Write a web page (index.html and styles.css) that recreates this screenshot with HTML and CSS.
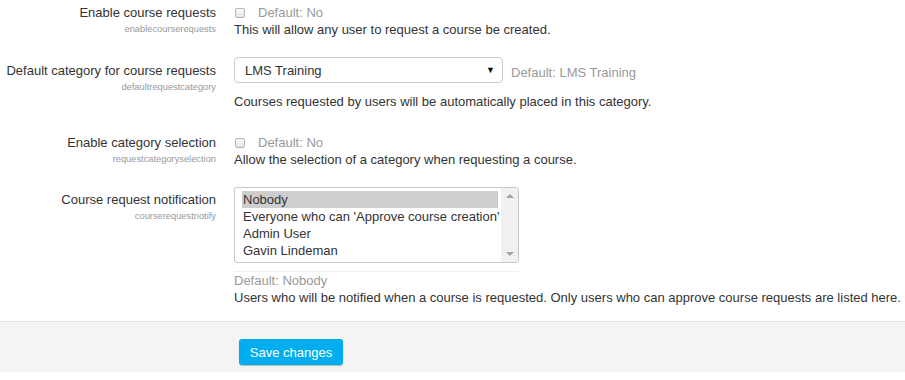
FILE: index.html
```html
<!DOCTYPE html>
<html>

<head>
    <title>Course requests</title>
    <link rel="stylesheet" href="styles.css">
</head>

<body>
    <form class="settings">
        <div class="setting row-first">
            <div class="label-col">
                <div class="label">Enable course requests</div>
                <div class="sublabel">enablecourserequests</div>
            </div>
            <div class="control-col">
                <div class="inline">
                    <span class="checkbox"></span>
                    <span class="default">Default: No</span>
                </div>
                <div class="desc">This will allow any user to request a course be created.</div>
            </div>
        </div>

        <div class="setting row-select">
            <div class="label-col label-select">
                <div class="label">Default category for course requests</div>
                <div class="sublabel">defaultrequestcategory</div>
            </div>
            <div class="control-col">
                <div class="inline">
                    <div class="select">
                        <span>LMS Training</span>
                        <span class="arrow">&#9660;</span>
                    </div>
                    <span class="default default-select">Default: LMS Training</span>
                </div>
                <div class="desc desc-select">Courses requested by users will be automatically placed in this category.</div>
            </div>
        </div>

        <div class="setting row-third">
            <div class="label-col">
                <div class="label">Enable category selection</div>
                <div class="sublabel">requestcategoryselection</div>
            </div>
            <div class="control-col">
                <div class="inline">
                    <span class="checkbox"></span>
                    <span class="default">Default: No</span>
                </div>
                <div class="desc">Allow the selection of a category when requesting a course.</div>
            </div>
        </div>

        <div class="setting row-list">
            <div class="label-col label-list">
                <div class="label">Course request notification</div>
                <div class="sublabel">courserequestnotify</div>
            </div>
            <div class="control-col">
                <div class="listbox">
                    <div class="options">
                        <div class="option selected">Nobody</div>
                        <div class="option">Everyone who can 'Approve course creation'</div>
                        <div class="option">Admin User</div>
                        <div class="option">Gavin Lindeman</div>
                    </div>
                    <div class="scrollbar">
                        <span class="up"></span>
                        <span class="down"></span>
                    </div>
                </div>
                <div class="list-rule"></div>
                <div class="default">Default: Nobody</div>
                <div class="desc">Users who will be notified when a course is requested. Only users who can approve course requests are listed here.</div>
            </div>
        </div>

        <div class="buttons">
            <button type="button" class="btn-save">Save changes</button>
        </div>
    </form>
</body>

</html>
```

FILE: styles.css
```css
* {
    padding: 0;
    margin: 0;
    box-sizing: border-box;
}

body {
    background-color: #fff;
    font-family: "Liberation Sans", Arial, sans-serif;
    font-size: 13px;
    line-height: 17px;
    color: #333;
}

.settings {
    padding-top: 4px;
}

.setting {
    display: grid;
    grid-template-columns: 216px 1fr;
    column-gap: 18px;
}

.row-select {
    margin-top: 19px;
}

.row-third {
    margin-top: 24px;
}

.row-list {
    margin-top: 19px;
}

.label-col {
    text-align: right;
}

.label-select {
    padding-top: 5px;
}

.label-list {
    padding-top: 4px;
}

.sublabel {
    font-size: 9.3px;
    color: #999;
}

.inline {
    display: flex;
    align-items: center;
}

.checkbox {
    width: 10px;
    height: 10px;
    margin-left: 1px;
    border: 1px solid #b4b4b4;
    border-radius: 2px;
    background: linear-gradient(#fafafa, #e6e6e6);
}

.default {
    color: #999;
}

.checkbox + .default {
    margin-left: 13px;
}

.select {
    width: 269px;
    height: 26px;
    border: 1px solid #ccc;
    border-radius: 4px;
    display: flex;
    align-items: center;
    justify-content: space-between;
    padding: 0 7px 0 10px;
    font-size: 13px;
    color: #333;
}

.arrow {
    font-size: 9px;
    color: #111;
}

.default-select {
    margin-left: 8px;
    margin-top: 4px;
}

.desc-select {
    margin-top: 10px;
}

.listbox {
    width: 285px;
    height: 76px;
    border: 1px solid #c8c8c8;
    border-radius: 3px;
    display: flex;
}

.options {
    flex: 1;
    min-width: 0;
    padding: 3px 3px 3px 7px;
}

.option {
    height: 17px;
    line-height: 17px;
    padding-left: 1px;
    white-space: nowrap;
}

.option.selected {
    background-color: #cecece;
}

.scrollbar {
    width: 17px;
    background-color: #f1f1f1;
    display: flex;
    flex-direction: column;
    justify-content: space-between;
    align-items: center;
    padding: 6px 0;
    border-radius: 0 3px 3px 0;
}

.up,
.down {
    width: 0;
    height: 0;
    border-left: 4px solid transparent;
    border-right: 4px solid transparent;
}

.up {
    border-bottom: 4px solid #a3a3a3;
}

.down {
    border-top: 4px solid #a3a3a3;
}

.list-rule {
    width: 285px;
    height: 1px;
    margin-top: 8px;
    background-color: #f0f0f0;
}

.buttons {
    margin-top: 15px;
    border-top: 1px solid #e3e3e3;
    background-color: #f4f4f4;
    height: 51px;
    padding: 17px 0 0 239px;
}

.btn-save {
    width: 104px;
    height: 26px;
    border: none;
    border-radius: 3px;
    background-color: #00aeef;
    box-shadow: 0 1px 1px rgba(0, 0, 0, 0.25);
    color: #fff;
    font-family: "Liberation Sans", Arial, sans-serif;
    font-size: 13px;
}
```
